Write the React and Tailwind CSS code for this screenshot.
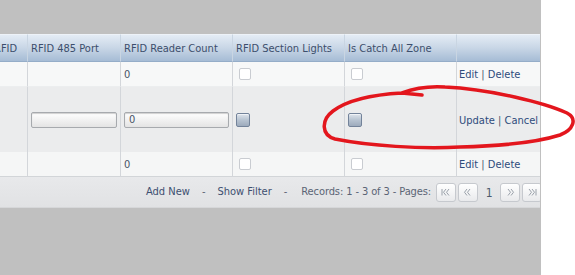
import React from "react";

const font = "font-['DejaVu_Sans_Condensed','Liberation_Sans',sans-serif]";

const headers = ["RFID", "RFID 485 Port", "RFID Reader Count", "RFID Section Lights", "Is Catch All Zone", ""];

const EmptyBox = () => (
  <span className="block w-[12px] h-[12px] rounded-[2px] border border-[#c9ccd1] bg-white" />
);

const EditBox = () => (
  <span className="block w-[14px] h-[14px] rounded-[2px] border border-[#73839a] bg-gradient-to-b from-[#dfe5ec] via-[#b7c3d1] to-[#9dabbd] shadow-[inset_0_1px_0_#f0f3f7]" />
);

const TextInput = ({ value }) => (
  <div className="h-[16px] w-full rounded-[2px] border border-[#a7aaae] bg-gradient-to-b from-white to-[#e4e4e4] shadow-[inset_0_1px_1px_#d0d0d0] flex items-center pl-[4px] pt-[1px] text-[11px] text-[#4a5466]">
    {value}
  </div>
);

const Links = ({ a, b }) => (
  <span className="text-[#2e4b7c]">
    {a} <span className="text-[#4d5a6e]">|</span> {b}
  </span>
);

const ViewRow = ({ bg }) => (
  <>
    <div className={`${bg} border-r border-[#d3d6da] h-[25px]`} />
    <div className={`${bg} border-r border-[#d3d6da] h-[25px]`} />
    <div className={`${bg} border-r border-[#d3d6da] h-[25px] flex items-center pl-[3px] pt-[3px] text-[#4a5466]`}>0</div>
    <div className={`${bg} border-r border-[#d3d6da] h-[25px] flex items-center pl-[6px]`}>
      <EmptyBox />
    </div>
    <div className={`${bg} border-r border-[#d3d6da] h-[25px] flex items-center pl-[6px]`}>
      <EmptyBox />
    </div>
    <div className={`${bg} h-[25px] flex items-center pl-[2px] pt-[3px]`}>
      <Links a="Edit" b="Delete" />
    </div>
  </>
);

// pager arrows: dir -1 = back, 1 = forward; bar = go to first/last
const PagerBtn = ({ dir, bar }) => {
  const m = (x) => (dir < 0 ? x : 20 - x);
  return (
    <span className="w-[20px] h-[19px] shrink-0 rounded-[3px] border border-[#c6c9ce] bg-gradient-to-b from-white to-[#e9eaec] flex items-center justify-center">
      <svg width="18" height="17" viewBox="1 1 18 17" fill="none" stroke="#9aa1aa" strokeWidth="1">
        {bar && <path d={`M${m(6)} 6 L${m(6)} 12.5`} />}
        <path d={`M${m(bar ? 10 : 9)} 6 L${m(bar ? 7.5 : 6.5)} 9.25 L${m(bar ? 10 : 9)} 12.5`} />
        <path d={`M${m(bar ? 13 : 12)} 6 L${m(bar ? 10.5 : 9.5)} 9.25 L${m(bar ? 13 : 12)} 12.5`} />
      </svg>
    </span>
  );
};

export default function App() {
  return (
    <div className={`relative w-[575px] h-[275px] flex bg-white ${font} text-[11px]`}>
      <div className="w-[541px] h-full bg-[#c0c0c0] pt-[34px] overflow-hidden">
        <div className="ml-[-9px] w-[549px] grid grid-cols-[37px_93px_112px_112px_112px_83px]">
          {headers.map((h, i) => (
            <div
              key={i}
              className={`h-[28px] flex items-center pl-[3px] pt-[2px] whitespace-nowrap overflow-hidden text-[#3c4e6c] bg-gradient-to-b from-[#e4ecf5] via-[#c8d6e6] to-[#a6bcd5] border-t border-[#edf2f8] border-b border-b-[#95adc8] ${i < 5 ? "border-r border-r-[#c9d5e2]" : ""}`}
            >
              {h}
            </div>
          ))}

          <ViewRow bg="bg-[#f7f8f8] border-b border-b-[#eceeef]" />

          <div className="h-[65px] bg-[#ebeced] border-r border-[#d3d6da]" />
          <div className="h-[65px] bg-[#ebeced] border-r border-[#d3d6da] flex items-center px-[3px]">
            <TextInput value="" />
          </div>
          <div className="h-[65px] bg-[#ebeced] border-r border-[#d3d6da] flex items-center px-[3px]">
            <TextInput value="0" />
          </div>
          <div className="h-[65px] bg-[#ebeced] border-r border-[#d3d6da] flex items-center pl-[3px]">
            <EditBox />
          </div>
          <div className="h-[65px] bg-[#ebeced] border-r border-[#d3d6da] flex items-center pl-[3px]">
            <EditBox />
          </div>
          <div className="h-[65px] bg-[#ebeced] flex items-center pl-[2px] pt-[3px]">
            <Links a="Update" b="Cancel" />
          </div>

          <ViewRow bg="bg-[#f5f6f6] border-b border-b-[#d2d5d8]" />
        </div>

        <div className="h-[31px] w-[540px] overflow-hidden bg-gradient-to-b from-[#e8e9eb] to-[#e1e2e4] border-b border-[#d6d7d9] flex items-center pl-[146px] pt-[1px] whitespace-nowrap">
          <span className="text-[#3d4f70]">Add New</span>
          <span className="ml-[12px] text-[#5b6475]">-</span>
          <span className="ml-[12px] text-[#3d4f70]">Show Filter</span>
          <span className="ml-[12px] text-[#5b6475]">-</span>
          <span className="ml-[14px] tracking-[-0.1px] text-[#5b6475]">Records: 1 - 3 of 3 - Pages:</span>
          <div className="ml-[5px] flex items-center gap-[2px] shrink-0">
            <PagerBtn dir={-1} bar />
            <PagerBtn dir={-1} />
            <span className="w-[18px] text-center text-[12px] text-[#4d5a6e]">1</span>
            <PagerBtn dir={1} />
            <PagerBtn dir={1} bar />
          </div>
        </div>
      </div>
      <div className="flex-1 h-full bg-white" />

      <svg className="absolute inset-0 pointer-events-none" width="575" height="275" viewBox="0 0 575 275">
        <path
          d="M422 95 L402 93 C415 88 430 86 445 87 C490 89 545 103 567 113 C578 119 573 130 560 135 C535 143 500 146 460 147 C420 149 370 146 335 139 C321 135 321 120 333 111 C345 102 365 95 402 93"
          fill="none"
          stroke="#e3161d"
          strokeWidth="3.5"
          strokeLinecap="round"
          strokeLinejoin="round"
        />
      </svg>
    </div>
  );
}
